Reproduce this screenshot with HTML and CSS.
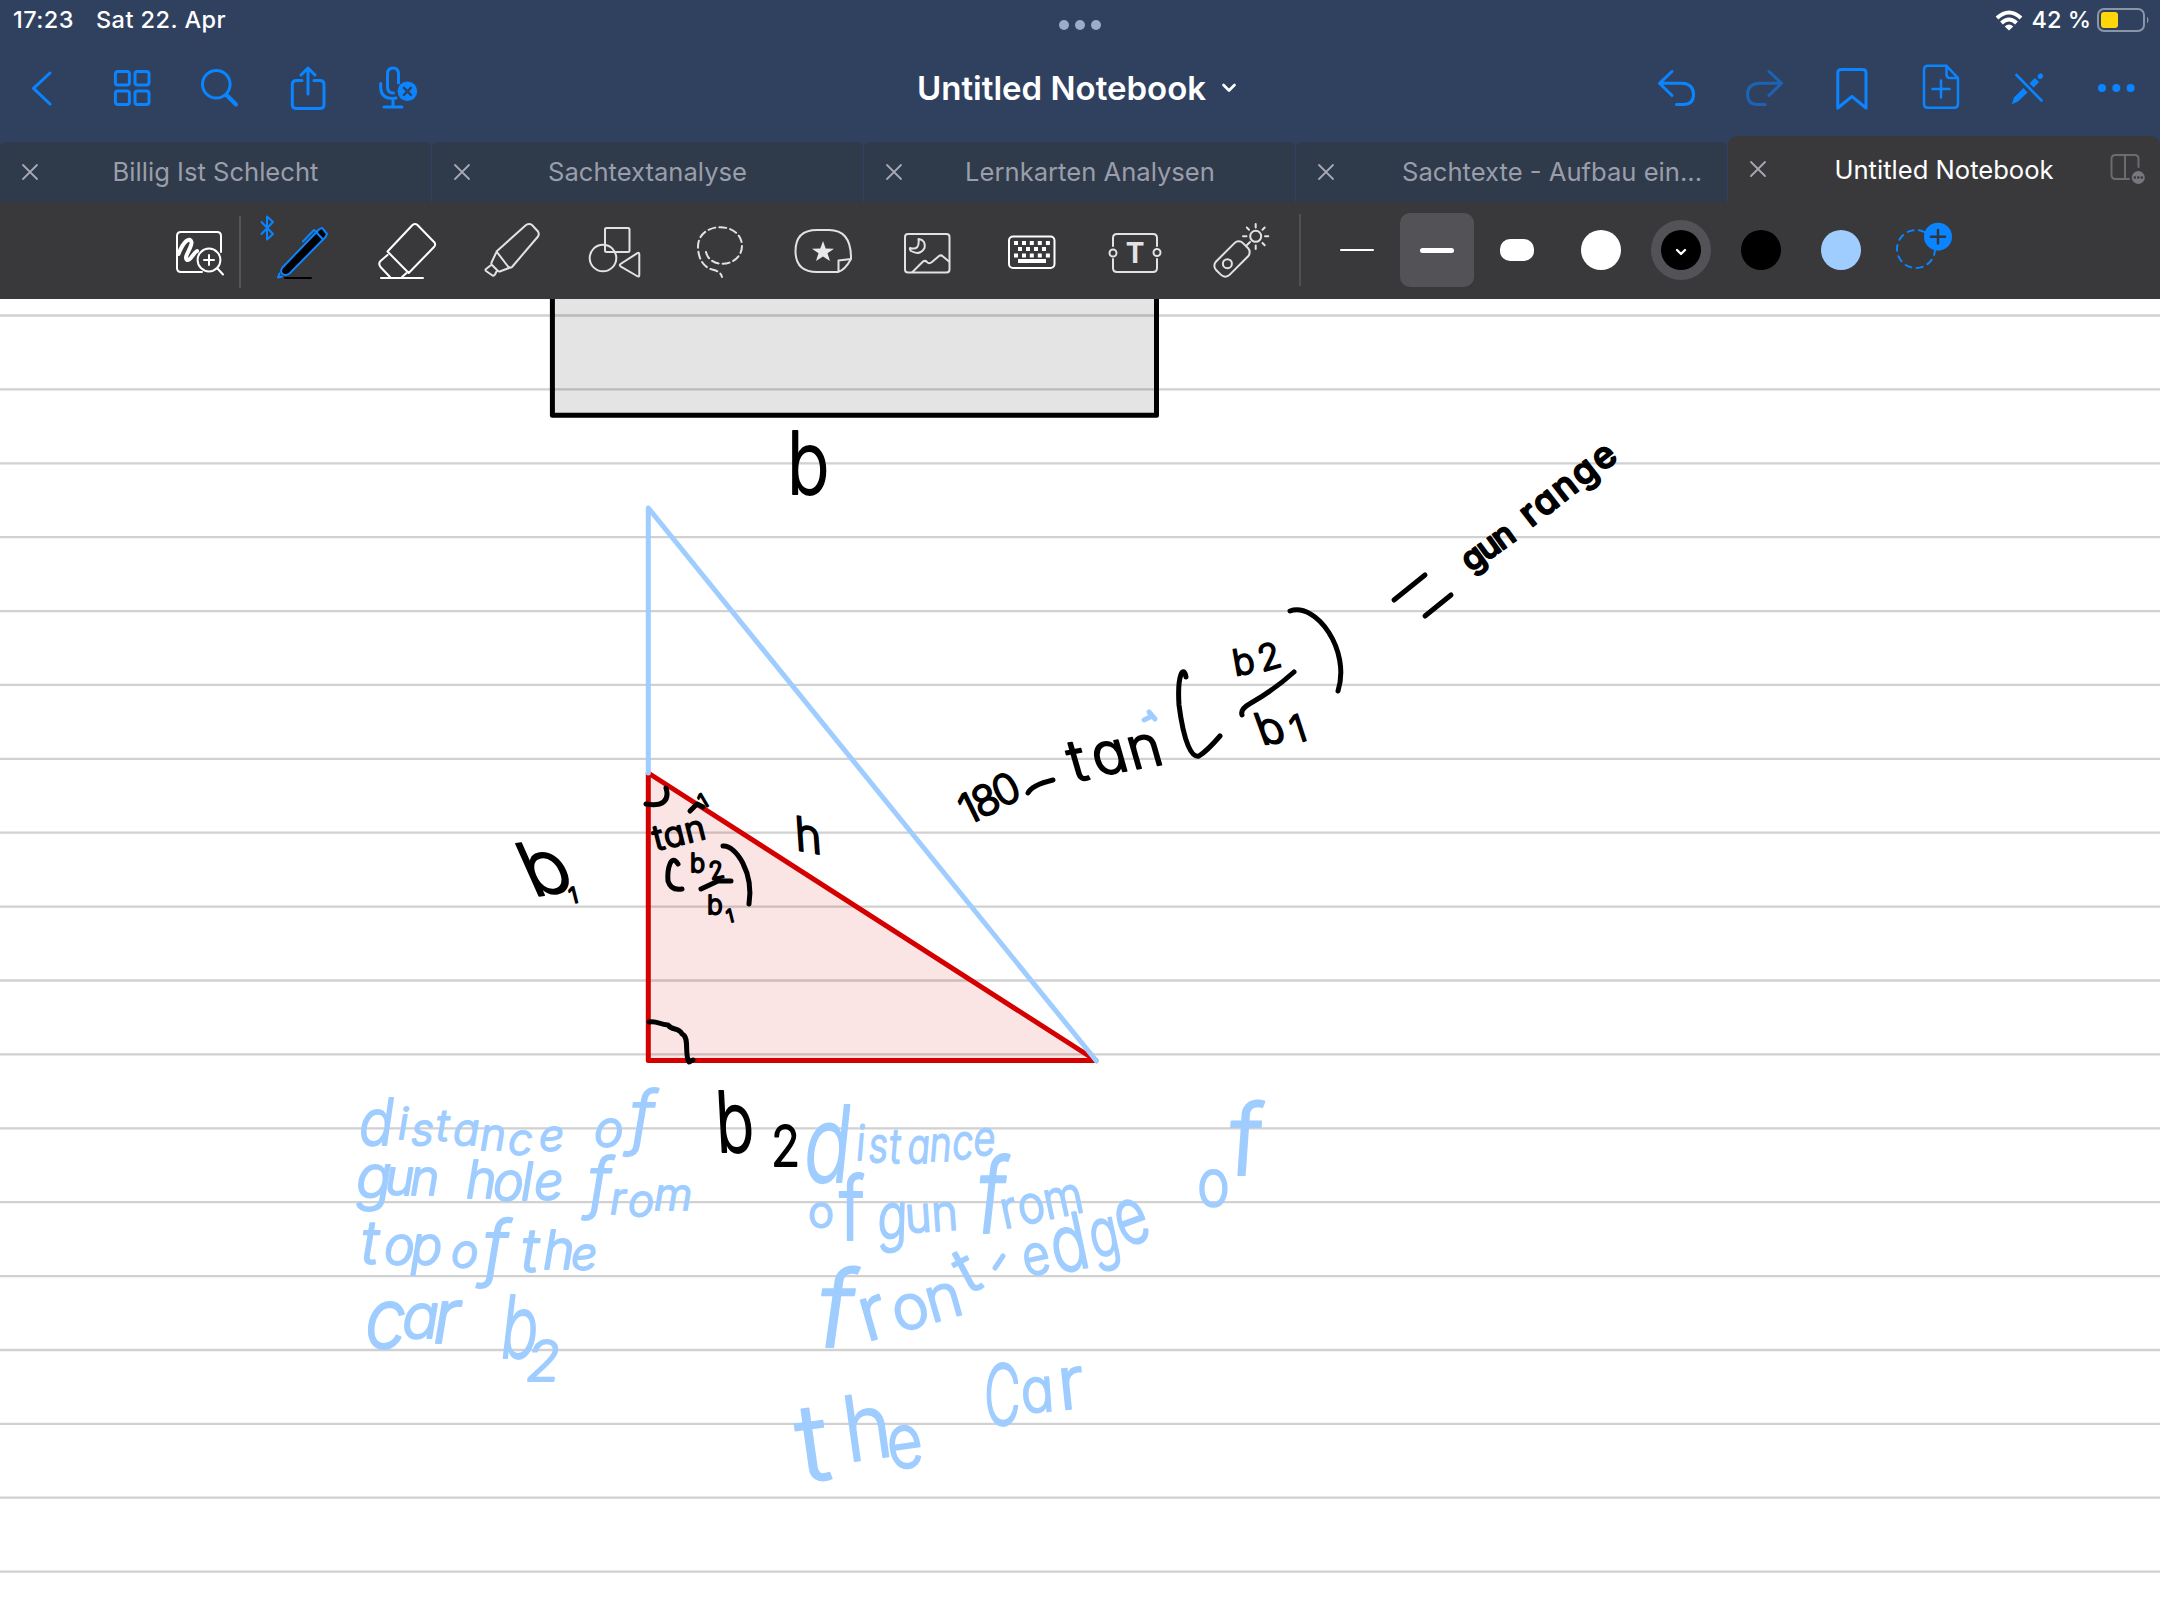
FILE: index.html
```html
<!DOCTYPE html>
<html lang="de">
<head>
<meta charset="utf-8">
<title>Untitled Notebook</title>
<link rel="stylesheet" href="styles.css">
</head>
<body>
<div class="app">
  <header class="top">
    <div class="status">
      <div class="status-left"><span class="clock">17:23</span><span class="date">Sat 22. Apr</span></div>
      <svg class="multitask" viewBox="1056 18 48 14"><circle cx="1064" cy="25" r="5"/><circle cx="1080" cy="25" r="5"/><circle cx="1096" cy="25" r="5"/></svg>
      <div class="status-right">
        <svg class="wifi" viewBox="0 0 28 21"><path d="M2 8Q14-3 26 8" stroke-width="4"/><path d="M6.5 13Q14 6 21.5 13" stroke-width="4"/><path d="M9.7 16.4Q14 12.5 18.3 16.4L14 20.6Z" class="solid"/></svg>
        <span class="percent">42 %</span>
        <svg class="battery" viewBox="0 0 54 24"><rect x="1" y="1" width="46" height="22" rx="6" class="shell"/><rect x="4" y="4" width="17" height="16" rx="3" class="charge"/><path d="M50 8.5q3 3.500 0 7z" class="nub"/></svg>
      </div>
    </div>
    <nav class="nav">
      <div class="nav-group">
        <svg class="nav-icon" viewBox="0 44 88 88"><path d="M50 73L33.500 88.300L50 104"/></svg>
        <svg class="nav-icon" viewBox="88 44 88 88"><rect x="115.400" y="71.500" width="14" height="13.600" rx="2.500"/><rect x="135" y="71.500" width="14" height="13.600" rx="2.500"/><rect x="115.400" y="91" width="14" height="13.600" rx="2.500"/><rect x="135" y="91" width="14" height="13.600" rx="2.500"/></svg>
        <svg class="nav-icon" viewBox="176 44 88 88"><circle cx="216.300" cy="84.200" r="13.800"/><path d="M226.500 95L236 104.500" stroke-width="4"/></svg>
        <svg class="nav-icon" viewBox="264 44 88 88"><path d="M302 80.500H296.500Q292.300 80.500 292.300 84.500V104.500Q292.300 108.500 296.500 108.500H319.800Q324 108.500 324 104.500V84.500Q324 80.500 319.800 80.500H314M308 94V68M301 75L308 68L315 75"/></svg>
        <svg class="nav-icon" viewBox="352 44 88 88"><path d="M398.500 83V74Q398.500 68 393 68Q387.500 68 387.500 74V87Q387.500 93 393.500 93M380.700 83.500V87Q380.700 98.500 393 98.500L396 98M393 99V107M384 107H402"/><circle cx="407.400" cy="91.300" r="9.800" class="fill"/><path d="M403.900 87.800L410.900 94.800M410.900 87.800L403.900 94.800" class="cut"/></svg>
      </div>
      <div class="title"><span>Untitled Notebook</span><svg class="title-chevron" viewBox="0 0 16 12"><path d="M2.500 3L8 8.500L13.500 3"/></svg></div>
      <div class="nav-group">
        <svg class="nav-icon" viewBox="1632 44 88 88"><path d="M1672 71.500L1659.500 83.300L1672 95.500M1660 83.300H1682Q1693.500 84 1693.500 94.500Q1693.500 104.500 1683 104.500H1676.500"/></svg>
        <svg class="nav-icon dim" viewBox="1720 44 88 88"><path d="M1769 71.500L1781.500 83.300L1769 95.500M1781 83.300H1759.500Q1747.500 84 1747.500 94.500Q1747.500 104.500 1758 104.500H1765"/></svg>
        <svg class="nav-icon" viewBox="1808 44 88 88"><path d="M1837.800 108V73Q1837.800 69.500 1841.300 69.500H1862.500Q1866 69.500 1866 73V108L1851.900 96.500Z"/></svg>
        <svg class="nav-icon" viewBox="1896 44 88 88"><path d="M1946.500 65.800H1928Q1924 65.800 1924 70V103.500Q1924 107.800 1928 107.800H1954Q1958 107.800 1958 103.500V78L1946.500 65.800V74.500Q1946.500 78 1950 78H1958M1941 80.500V97.500M1932.500 89H1949.500" stroke-width="2.500"/></svg>
        <svg class="nav-icon" viewBox="1984 44 88 88"><path d="M2011.800 104.200L2014 97.500L2023.500 88L2027.500 92.500L2018 101.500Z" class="fill"/><path d="M2030.500 86.500L2037 80" stroke-width="6" stroke-linecap="butt"/><path d="M2040 76.500L2040.600 76" stroke-width="5"/><path d="M2018 73.500L2043 99" class="cut"/><path d="M2016.500 75L2041.500 100.500" stroke-width="2.700"/></svg>
        <svg class="nav-icon" viewBox="2072 44 88 88"><circle cx="2102" cy="88" r="4" class="fill"/><circle cx="2116.300" cy="88" r="4" class="fill"/><circle cx="2130.600" cy="88" r="4" class="fill"/></svg>
      </div>
    </nav>
    <div class="tabs">
      <div class="tab"><svg class="close" viewBox="0 0 18 18"><path d="M2 2L16 16M16 2L2 16"/></svg><span class="tab-name">Billig Ist Schlecht</span></div>
      <div class="tab"><svg class="close" viewBox="0 0 18 18"><path d="M2 2L16 16M16 2L2 16"/></svg><span class="tab-name">Sachtextanalyse</span></div>
      <div class="tab"><svg class="close" viewBox="0 0 18 18"><path d="M2 2L16 16M16 2L2 16"/></svg><span class="tab-name shifted">Lernkarten Analysen</span></div>
      <div class="tab"><svg class="close" viewBox="0 0 18 18"><path d="M2 2L16 16M16 2L2 16"/></svg><span class="tab-name long">Sachtexte - Aufbau ein...</span></div>
      <div class="tab active"><svg class="close" viewBox="0 0 18 18"><path d="M2 2L16 16M16 2L2 16"/></svg><span class="tab-name">Untitled Notebook</span><svg class="split" viewBox="2108 152 40 36"><path d="M2138.500 168V160Q2138.500 156 2134.500 156H2115.500Q2111.500 156 2111.500 160V176Q2111.500 180 2115.500 180H2129M2125 156V180"/><circle cx="2138.300" cy="178.500" r="6.500"/><path d="M2134.800 178.500h.1M2138.300 178.500h.1M2141.800 178.500h.1" class="dots"/></svg></div>
    </div>
  </header>

  <div class="tools">
    <div class="tool-group">
      <svg class="tool bright" viewBox="147 201 104 98"><path d="M221 252V236Q221 232 217 232H181Q177 232 177 236V268Q177 272 181 272H202"/><path d="M178.500 254C184 240 190 237 191.500 242C192.500 247 183 257 187 260C191 261 193 253 197 251" stroke-width="4"/><circle cx="209" cy="260" r="11.400"/><path d="M217.500 268.500L223 274.500M209 255V265M204 260H214"/><path d="M240 216V288" class="divider"/></svg>
      <svg class="tool" viewBox="251 201 104 98"><path d="M261.500 222L273 234L267 239.500V216.500L273 222L261.500 234" class="blue"/><path d="M319 229.500L322 227.800L327 234L325.500 237L289.500 273.500Q285.500 276.500 282 273.500Q280 271 282.500 267.500Z" class="pen-body"/><path d="M303 241.500L314 230L317 232M316.500 232.500L323 239.500M278 277.500L279.500 273.500M278 277.500L282 276.500" class="blue"/><path d="M285 278H311" class="black"/></svg>
      <svg class="tool bright" viewBox="355 201 104 98"><path d="M412.500 225Q415 223 417.500 225L434.500 242.500Q436 245 434 247L408.700 273L387.500 251.500ZM387.500 255L380.500 261Q378 263.500 380.500 267L390 277M402 277L406.500 273M381 278H423"/></svg>
      <svg class="tool" viewBox="459 201 104 98"><path d="M496.500 251.500L526 225Q529.500 223 532 225L538 231.500Q539.500 234 538 236.500L512 267Q510 268.500 508 266.500ZM496 253L491.500 262.500Q491 264 492 265L498 271Q499 272 501 271L509 268M490.500 265.500L486 269Q485 270 486 271L492.500 275.500Q494 276 495 274.500L496.500 271.500"/></svg>
      <svg class="tool" viewBox="563 201 104 98"><rect x="605" y="228" width="24.500" height="24" rx="1.500"/><circle cx="603" cy="258" r="13.300"/><path d="M637 253.300Q639.300 252 639.300 254.500V275Q639.300 277.500 637 276L620.500 266.300Q619 265 620.500 264Z"/></svg>
      <svg class="tool" viewBox="667 201 104 98"><path d="M706 252C710 270 742 267 742 245.500C741 221 699 221 698 246C698 258 703 268 714 270Q721 272 722 277" stroke-dasharray="7 4"/></svg>
      <svg class="tool" viewBox="771 201 104 98"><path d="M851 258Q851 230 829 230H817Q795.500 230 795.500 251Q795.500 272 817 272H838Q845 270 851 259L838.500 260.500V271.500"/><path d="M823 241L825.700 248.400L834 248.700L827.500 253.300L830 261L823 256.500L816 261L818.500 253.300L812 248.700L820.300 248.400Z" class="solid"/></svg>
      <svg class="tool" viewBox="875 201 104 98"><rect x="905" y="234" width="44.500" height="38.500" rx="3"/><path d="M912.500 272L923 261.500Q925 260 927 262Q929 264.500 932 262L939 256Q941 254.500 943 256.500L949 261.500M918.500 239Q926 240 924.500 248Q920 256 911 251Q909.500 249.500 910 248Q920 251 918.500 239Z"/></svg>
      <svg class="tool bright" viewBox="979 201 104 98"><rect x="1009" y="236.500" width="45.500" height="31.500" rx="4"/><path d="M1016 241V258M1024 241V258M1031.800 241V258M1039.800 241V258M1047.900 241V258" stroke-width="4" stroke-linecap="butt" stroke-dasharray="4 8.500"/><path d="M1018 249H1046" stroke-width="4" stroke-linecap="butt" stroke-dasharray="4 4"/><path d="M1018 261H1046" stroke-width="4" stroke-linecap="butt"/></svg>
      <svg class="tool" viewBox="1083 201 104 98"><path d="M1113 246V238Q1113 234 1117 234H1153Q1157 234 1157 238V246M1157 259V268Q1157 272 1153 272H1117Q1113 272 1113 268V259"/><circle cx="1113" cy="253" r="3.500"/><circle cx="1157" cy="252.500" r="3.500"/><text x="1135" y="263" class="icon-letter">T</text></svg>
      <svg class="tool" viewBox="1187 201 104 98"><rect x="1213" y="249.500" width="38" height="19" rx="6" transform="rotate(-45 1232 259)"/><circle cx="1227.400" cy="263.700" r="4.500"/><circle cx="1255.700" cy="236.300" r="5.500"/><path d="M1247 245L1250 242M1255.700 227.500V224M1255.700 245.500V249M1246.500 236.300H1243M1265 236.300H1268.300M1262.500 229.700L1264.700 227.500M1262.500 243L1264.700 245.300M1249 229.700L1246.800 227.500"/></svg>
    </div>
    <div class="rule"></div>
    <div class="sizes">
      <button class="size"><i class="thin"></i></button>
      <button class="size selected"><i class="medium"></i></button>
      <button class="size"><i class="thick"></i></button>
    </div>
    <div class="colors">
      <div class="swatch"><i class="dot white"></i></div>
      <div class="swatch"><i class="ring"><i class="dot ink"><svg class="dot-chevron" viewBox="0 0 12 8"><path d="M2 2L6 6L10 2"/></svg></i></i></div>
      <div class="swatch"><i class="dot ink"></i></div>
      <div class="swatch"><i class="dot sky"></i></div>
      <svg class="add-color" viewBox="1881 201 80 98"><circle cx="1916" cy="249" r="19" class="dash"/><circle cx="1938" cy="236.700" r="14" class="badge"/><path d="M1938 230V243.500M1931 236.700H1945" class="plus"/></svg>
    </div>
  </div>

  <main class="page">
    <svg class="sheet" viewBox="0 299 2160 1321">
      <path class="lines" d="M0 315.500H2160M0 389.400H2160M0 463.300H2160M0 537.200H2160M0 611.100H2160M0 684.900H2160M0 758.800H2160M0 832.700H2160M0 906.600H2160M0 980.500H2160M0 1054.400H2160M0 1128.300H2160M0 1202.200H2160M0 1276.100H2160M0 1350H2160M0 1423.800H2160M0 1497.700H2160M0 1571.600H2160"/>
      <path class="box" d="M552.400 290V415.300H1156.500V290"/>
      <path class="triangle" d="M648.300 773L1096 1060.500H648.300Z"/>
      <path class="sky-line" d="M648.300 773V508L1096.500 1061"/>

      <!-- brackets, bars and angle marks -->
      <g class="ink-line">
        <path d="M666 788C670 801 662 807 646 804M649 1022C657 1020 659 1025 668 1025C672 1031 679 1027 682 1034C690 1037 684 1054 689 1062L693 1060"/>
        <path d="M690 811L697 804L703 807M678 864C671 853 667 869 668 881Q671 891 682 889M701 889L718 881L731 881M723 846C736 845 754 873 749 904"/>
        <path d="M1028 793Q1032 785 1053 780M1186 677C1184 665 1177 673 1179 705C1184 744 1192 758 1199 756Q1207 751 1220 736M1242 715Q1240 709 1251 703Q1274 690 1294 672M1290 611C1316 602 1351 650 1338 691"/>
        <path d="M1394 600L1425 575M1425 616L1451 595"/>
      </g>
      <path class="sky-line" d="M1144 720L1152 716M1149 712L1155 719"/>
      <path class="sky-line" d="M995 1268L1003 1256"/>

      <g class="note black-note">
        <text transform="translate(787 494) scale(.82 1)" font-size="86">b</text>
        <text transform="translate(533 897) rotate(-10) skewX(14)" font-size="76">b</text>
        <text transform="translate(571 904) rotate(-14)" font-size="22">1</text>
        <text transform="translate(796 850) rotate(10) skewX(14)" font-size="46">h</text>
        <text transform="translate(656 851) rotate(-14)" font-size="35" textLength="53">tan</text>
        <text transform="translate(703 809) rotate(-30)" font-size="20">1</text>
        <text x="690" y="872" font-size="25">b</text>
        <text transform="translate(711 880) rotate(-12)" font-size="24">2</text>
        <text x="707" y="914" font-size="26">b</text>
        <text transform="translate(728 923) rotate(-14)" font-size="18">1</text>
        <text transform="translate(975 822) rotate(-26)" font-size="42" x="-8 6 29" y="0 0 -1">180</text>
        <text transform="translate(1074 782) rotate(-10) skewX(6)" font-size="58" x="0 24 60" y="0 -2 -2">tan</text>
        <text transform="translate(1235 676) rotate(-10)" font-size="36">b</text>
        <text transform="translate(1262 672) rotate(-16)" font-size="36">2</text>
        <text transform="translate(1262 745) rotate(-8) skewX(12)" font-size="44">b</text>
        <text transform="translate(1295 744) rotate(-18)" font-size="38">1</text>
        <text class="bold" transform="translate(1471 573) rotate(-36)" font-size="34" textLength="58">gun</text>
        <text class="bold" transform="translate(1531 528) rotate(-38)" font-size="37" textLength="112">range</text>
        <text transform="translate(717 1152) scale(.76 1) skewX(4)" font-size="84">b</text>
        <text transform="translate(771 1166) scale(.85 1)" font-size="56">2</text>
      </g>

      <g class="note sky-note slanted">
        <text transform="translate(359 1145) scale(.9 1)" font-size="64">d</text>
        <text x="398 411 436 453 480 508 539" y="1139 1145 1141 1145 1150 1155 1151" font-size="44">istance</text>
        <text x="594 630" y="1146 1141" font-size="50">o<tspan font-size="70">f</tspan></text>
        <text x="356 385 410" y="1198 1195 1195" font-size="50"><tspan font-size="60">g</tspan>un</text>
        <text x="466 493 521 534" y="1198 1200 1200 1200" font-size="52">hole</text>
        <text x="588 610 628 654" y="1205 1214 1216 1210" font-size="44"><tspan font-size="66">f</tspan>rom</text>
        <text x="361 384 411" y="1264 1264 1264" font-size="52"><tspan font-size="60">t</tspan>op</text>
        <text x="451 483" y="1267 1272" font-size="46">o<tspan font-size="72">f</tspan></text>
        <text x="521 543 571" y="1272 1269 1270" font-size="46"><tspan font-size="60">t</tspan><tspan font-size="54">h</tspan>e</text>
        <text transform="translate(365 1348) scale(.88 1)" font-size="84">c</text>
        <text x="402 433" y="1338 1343" font-size="62">a<tspan font-size="76">r</tspan></text>
        <text transform="translate(501 1358) scale(.72 1)" font-size="86">b</text>
        <text x="526" y="1381" font-size="56">2</text>
      </g>
      <g class="note sky-note">
        <text transform="translate(801 1182) scale(.74 1) skewX(-8)" font-size="106">d</text>
        <text transform="translate(855 1162) scale(.78 1) skewX(-6)" font-size="48" x="0 16 43 66 94 123 150" y="-2 0 1 1 -1 -3 -7">istance</text>
        <text x="808" y="1227" font-size="44">o</text>
        <text transform="translate(839 1240) scale(.85 1)" font-size="88">f</text>
        <text transform="translate(877 1240) scale(.78 1) skewX(-6) rotate(-4)" font-size="64">g</text>
        <text transform="translate(906 1233) rotate(-4) scale(.9 1)" font-size="50">un</text>
        <text transform="translate(974 1233) scale(.8 1) skewX(-8)" font-size="104">f</text>
        <text transform="translate(1004 1229) rotate(-12) scale(.88 1)" font-size="52" x="0 20 50">rom</text>
        <text transform="translate(814 1347) skewX(-8)" font-size="106">f</text>
        <text transform="translate(866 1342) rotate(-16)" font-size="62" x="0 33 68"><tspan font-size="76">r</tspan>on</text>
        <text transform="translate(968 1295) rotate(-28)" font-size="64">t</text>
        <text transform="translate(1026 1277) rotate(-12) scale(.85 1)" font-size="56">e</text>
        <text transform="translate(1056 1274) rotate(-12) scale(.8 1)" font-size="78">d</text>
        <text transform="translate(1094 1259) rotate(-12) scale(.72 1)" font-size="68">g</text>
        <text transform="translate(1124 1248) rotate(-20) scale(.7 1)" font-size="80">e</text>
        <text transform="translate(1197 1206) scale(.84 1)" font-size="66">o</text>
        <text transform="translate(1227 1175) skewX(-4)" font-size="98">f</text>
        <text transform="translate(802 1483) rotate(-8)" font-size="108">t</text>
        <text transform="translate(848 1462) rotate(-8) scale(.9 1)" font-size="90">h</text>
        <text transform="translate(890 1470) rotate(-8) scale(.82 1)" font-size="76">e</text>
        <text transform="translate(984 1425) scale(.6 1)" font-size="84">C</text>
        <text transform="translate(1022 1413) rotate(-4) scale(.9 1)" font-size="62">a</text>
        <text transform="translate(1060 1410) rotate(-6)" font-size="74">r</text>
      </g>
    </svg>
  </main>
</div>
</body>
</html>
```

FILE: styles.css
```css
* { box-sizing: border-box; }
body { margin: 0; background: #fff; font-family: Inter, "Liberation Sans", sans-serif; }
.app { width: 2160px; height: 1620px; display: flex; flex-direction: column; overflow: hidden; }
svg { display: block; fill: none; stroke-linecap: round; stroke-linejoin: round; }

.top { height: 201.500px; background: #30415f; display: flex; flex-direction: column; }
.status { height: 44px; display: grid; grid-template-columns: 1fr auto 1fr; color: #fff; font-size: 23.500px; font-weight: 450; line-height: 40px; }
.status-left { display: flex; gap: 22px; padding-left: 13px; letter-spacing: .45px; }
.multitask { width: 48px; height: 14px; margin-top: 18px; fill: #9aaccd; }
.status-right { display: flex; justify-content: flex-end; padding-right: 9px; }
.wifi { width: 28px; height: 21px; margin: 10px 8px 0 0; stroke: #fff; stroke-linecap: butt; }
.wifi .solid { fill: #fff; stroke: none; }
.battery { width: 54px; height: 24px; margin: 8px 0 0 6px; }
.shell { stroke: #8b95a8; stroke-width: 2; }
.charge { fill: #ffd60a; }
.nub { fill: #8b95a8; }

.nav { height: 88px; display: flex; justify-content: space-between; align-items: center; }
.nav-group { display: flex; }
.nav-group:first-child { width: 528px; }
.nav-icon { width: 88px; height: 88px; stroke: #0a84ff; stroke-width: 3; }
.nav-icon .fill { fill: #0a84ff; stroke: none; }
.nav-icon .cut { stroke: #30415f; stroke-width: 2.500; }
.nav-icon.dim { stroke: #1c64b3; }
.title { display: flex; align-items: center; gap: 15px; margin-right: 6px; color: #fff; font-size: 33px; font-weight: 600; }
.title-chevron { width: 16px; height: 12px; stroke: #fff; stroke-width: 2.700; }

.tabs { flex: 1; display: grid; grid-template-columns: repeat(5, 432px); align-items: end; }
.tab { height: 59.500px; margin-right: 1px; border-radius: 6px 6px 0 0; background: #2f3a4a; color: #9a9eab; display: grid; grid-template-columns: 60px 1fr 60px; align-items: center; }
.close { width: 18px; height: 18px; margin-left: 20.500px; stroke: #a6a9b3; stroke-width: 1.800; }
.tab-name { justify-self: center; font-size: 25.600px; white-space: nowrap; }
.shifted { margin-left: 21px; }
.long { justify-self: end; margin-right: -35px; }
.tab.active { height: 65.500px; margin: 0; background: #39393b; color: #fff; border-radius: 9px 9px 0 0; }
.active .tab-name { padding-top: 2px; }
.split { width: 40px; height: 36px; margin-left: 8px; stroke: #6b6b70; stroke-width: 2; }
.split circle { fill: #77777d; stroke: none; }
.split .dots { stroke: #39393b; stroke-width: 2.500; }

.tools { height: 97.500px; background: #39393b; display: flex; align-items: center; padding-left: 147px; }
.tool-group { display: flex; }
.tool { width: 104px; height: 98px; stroke: #e2e2e3; stroke-width: 2; }
.tool.bright { stroke: #fff; }
.tool .solid { fill: #e8e8e8; stroke: none; }
.tool .divider { stroke: #545458; stroke-linecap: butt; }
.tool .blue { stroke: #0a84ff; }
.tool .black { stroke: #000; }
.pen-body { fill: #000; stroke: #0a84ff; }
.icon-letter { font: 700 28px Inter, sans-serif; fill: #e2e2e3; stroke: none; text-anchor: middle; }
.rule { width: 2px; height: 72px; margin: 0 17px 0 8px; background: #505054; }
.sizes { display: flex; gap: 6px; margin-left: 2px; }
.size { width: 74px; height: 74px; border: 0; padding: 0; border-radius: 10px; background: none; display: flex; align-items: center; justify-content: center; }
.selected { background: #535257; }
.size i { width: 34px; background: #fff; }
.thin { height: 2px; border-radius: 1px; }
.medium { height: 5px; border-radius: 3px; }
.thick { height: 22px; border-radius: 10px; }
.colors { display: flex; align-items: center; margin-left: 7px; }
.swatch { width: 80px; display: flex; justify-content: center; }
.ring { width: 60px; height: 60px; border-radius: 50%; background: #535257; display: flex; align-items: center; justify-content: center; }
.dot { width: 40px; height: 40px; border-radius: 50%; display: flex; align-items: center; justify-content: center; }
.white { background: #fff; }
.ink { background: #000; }
.sky { background: #9fcdff; }
.dot-chevron { width: 12px; height: 8px; margin-top: 3px; stroke: #fff; stroke-width: 2.300; }
.add-color { width: 80px; height: 98px; }
.dash { stroke: #0a84ff; stroke-width: 2; stroke-dasharray: 6 5.500; }
.badge { fill: #0a84ff; }
.plus { stroke: #30363f; stroke-width: 2.500; }

.page { flex: 1; background: #fff; }
.sheet { width: 2160px; height: 1321px; }
.lines { stroke: #d1d1d1; stroke-width: 2.300; }
.box { fill: rgba(0, 0, 0, .105); stroke: #000; stroke-width: 5; stroke-linejoin: round; }
.triangle { fill: rgba(212, 0, 0, .105); stroke: #d40000; stroke-width: 5; }
.sky-line { stroke: #9fcdff; stroke-width: 5; }
.ink-line { stroke: #000; stroke-width: 5; }
.note { font-family: Inter, "Liberation Sans", sans-serif; font-weight: 300; font-feature-settings: "cv11", "ss03"; stroke-width: 1.800; }
.slanted { font-style: italic; }
.black-note { fill: #000; stroke: #000; }
.black-note .bold { font-weight: 500; }
.sky-note { fill: #9fcdff; stroke: #9fcdff; }
```
